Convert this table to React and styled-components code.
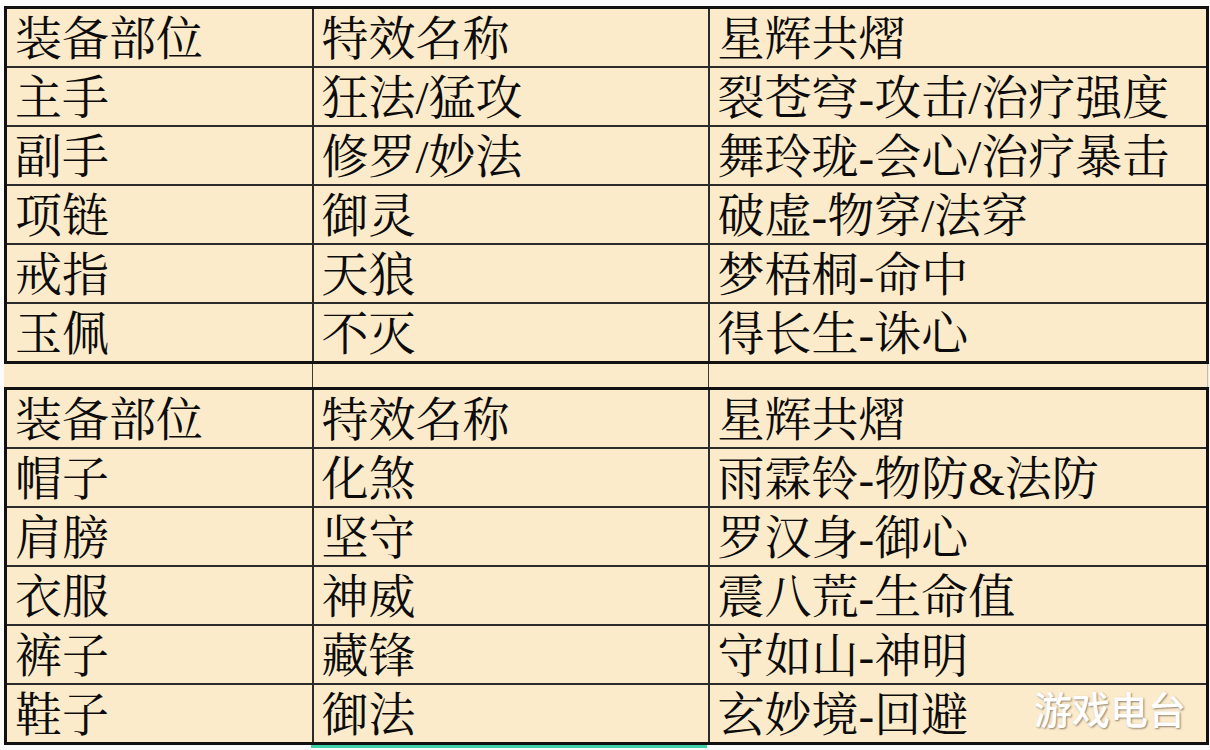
import React from 'react';
import styled, { createGlobalStyle } from 'styled-components';

const GlobalStyle = createGlobalStyle`
  html, body {
    margin: 0;
    padding: 0;
    background: #fbfbfb;
  }
  body {
    width: 1210px;
    height: 750px;
    overflow: hidden;
  }
`;

const bloqueUno = [
  ['主手', '狂法/猛攻', '裂苍穹-攻击/治疗强度'],
  ['副手', '修罗/妙法', '舞玲珑-会心/治疗暴击'],
  ['项链', '御灵', '破虚-物穿/法穿'],
  ['戒指', '天狼', '梦梧桐-命中'],
  ['玉佩', '不灭', '得长生-诛心'],
];

const bloqueDos = [
  ['帽子', '化煞', '雨霖铃-物防&法防'],
  ['肩膀', '坚守', '罗汉身-御心'],
  ['衣服', '神威', '震八荒-生命值'],
  ['裤子', '藏锋', '守如山-神明'],
  ['鞋子', '御法', '玄妙境-回避'],
];

const encabezado = ['装备部位', '特效名称', '星辉共熠'];

function Fila({ celdas, primera, ultima }) {
  return (
    <tr>
      {celdas.map((texto, i) => (
        <Celda key={i} $primera={primera} $ultima={ultima}>
          {texto}
        </Celda>
      ))}
    </tr>
  );
}

function Bloque({ filas }) {
  return (
    <>
      <Fila celdas={encabezado} primera />
      {filas.map((f, i) => (
        <Fila key={i} celdas={f} ultima={i === filas.length - 1} />
      ))}
    </>
  );
}

function App() {
  return (
    <>
      <GlobalStyle />
      <Hoja>
        <Tabla>
          <colgroup>
            <col style={{ width: 307 }} />
            <col style={{ width: 396 }} />
            <col style={{ width: 499 }} />
          </colgroup>
          <tbody>
            <Bloque filas={bloqueUno} />
            <tr>
              <CeldaVacia />
              <CeldaVacia />
              <CeldaVacia />
            </tr>
            <Bloque filas={bloqueDos} />
          </tbody>
        </Tabla>
        <Seleccion />
        <MarcaDeAgua>游戏电台</MarcaDeAgua>
      </Hoja>
    </>
  );
}

const Hoja = styled.div`
  position: relative;
  padding: 6px 0 0 4px;
  width: 1210px;
  height: 750px;
  box-sizing: border-box;
  background: #fbfbfb;
`;

const Tabla = styled.table`
  border-collapse: collapse;
  table-layout: fixed;
  width: 1203px;
  background: #fcebcb;
  font-family: "Liberation Serif", "Noto Serif CJK SC", "Noto Sans CJK SC", serif;
  color: #0c0c0c;
`;

const Celda = styled.td`
  height: 53px;
  padding: 4px 0 0 8px;
  font-size: 47px;
  line-height: 1;
  white-space: nowrap;
  vertical-align: middle;
  border: 2px solid #2b2b2b;
  border-top: ${p => (p.$primera ? '3px solid #111' : '2px solid #2b2b2b')};
  border-bottom: ${p => (p.$ultima ? '3px solid #111' : '2px solid #2b2b2b')};

  &:first-child {
    border-left: 3px solid #111;
  }
  &:last-child {
    border-right: 3px solid #111;
  }
`;

const CeldaVacia = styled.td`
  height: 23px;
  padding: 0;
  border-left: 1px solid #3a3a3a;
  border-right: 1px solid #3a3a3a;

  &:first-child {
    border-left: none;
  }
  &:last-child {
    border-right: 1px solid #bbb;
  }
`;

const Seleccion = styled.div`
  position: absolute;
  left: 311px;
  top: 745px;
  width: 396px;
  height: 3px;
  background: #3fd1a8;
`;

const MarcaDeAgua = styled.div`
  position: absolute;
  left: 1034px;
  top: 680px;
  font-family: "Noto Sans CJK SC", sans-serif;
  font-size: 38px;
  font-weight: 500;
  color: #ffffff;
  text-shadow: 1px 1px 2px rgba(0, 0, 0, 0.45);
`;

export default App;
